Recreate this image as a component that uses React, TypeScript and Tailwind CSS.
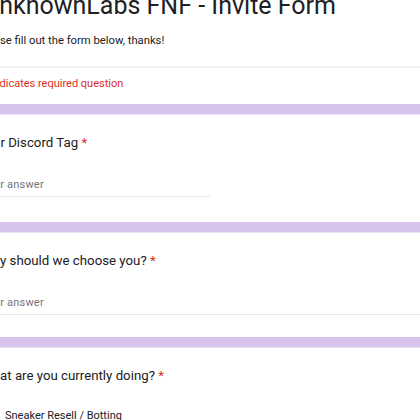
export default function App() {
  return (
    <div className="h-[420px] w-[420px] overflow-hidden bg-[#d7c3ee] font-['Roboto',sans-serif] text-[#202124]">
      <div className="-ml-[44px] flex w-[600px] flex-col gap-[10px]">
        <section className="h-[104px] bg-white">
          <div className="pl-[24px]">
            <h1 className="-mt-[10px] ml-[3px] text-[25px] leading-[32px] font-normal">UnknownLabs FNF - Invite Form</h1>
            <p className="-ml-[2px] mt-[11px] text-[11.25px] leading-[16px]">Please fill out the form below, thanks!</p>
          </div>
          <div className="mt-[17px] h-[2px] bg-[#efefef]" />
          <div className="pl-[24px]">
            <p className="ml-[3px] mt-[8px] text-[11px] leading-[16px] text-[#d93025]">* Indicates required question</p>
          </div>
        </section>

        <QuestionCard height="h-[108px]" title="Your Discord Tag" titleClass="-ml-[2px]">
          <TextAnswer short />
        </QuestionCard>

        <QuestionCard height="h-[105px]" title="Why should we choose you?" titleClass="ml-[1px]">
          <TextAnswer />
        </QuestionCard>

        <QuestionCard height="h-[120px]" title="What are you currently doing?" titleClass="ml-[1px]">
          <div className="mt-[22px] flex items-center gap-[9px]">
            <span className="h-[16px] w-[16px] shrink-0 rounded-full border-2 border-[#5f6368]" />
            <span className="text-[11px] leading-[16px]">Sneaker Resell / Botting</span>
          </div>
        </QuestionCard>
      </div>
    </div>
  );
}

function QuestionCard({
  height,
  title,
  titleClass = "",
  children
}: {
  height: string;
  title: string;
  titleClass?: string;
  children: React.ReactNode;
}) {
  return (
    <section className={`${height} border-t border-[#e9e1f3] bg-white pl-[24px] pt-[18px]`}>
      <div className={`text-[13.25px] leading-[20px] ${titleClass}`}>
        {title} <span className="text-[#d93025]">*</span>
      </div>
      {children}
    </section>
  );
}

function TextAnswer({ short = false }: { short?: boolean }) {
  return (
    <div className={`mt-[24px] ${short ? "w-[230px]" : "w-full"}`}>
      <div className="ml-[1px] text-[11px] leading-[16px] tracking-[0.2px] text-[#70757a]">Your answer</div>
      <div className="mt-[3px] h-px bg-[#e6e6e6]" />
    </div>
  );
}
